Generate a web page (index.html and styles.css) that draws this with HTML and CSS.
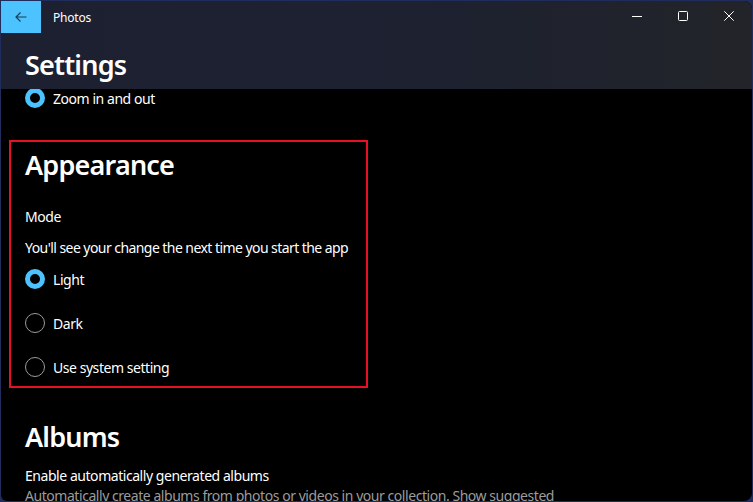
FILE: index.html
```html
<!DOCTYPE html>
<html lang="en">
<head>
<meta charset="utf-8">
<title>Photos</title>
<link rel="stylesheet" href="styles.css">
</head>
<body>
<div class="window">
  <header class="header">
    <div class="titlebar">
      <button class="back" aria-label="Back">
        <svg width="12" height="12" viewBox="0 0 12 12"><path d="M11.5 6H1M5.5 1.5L1 6l4.5 4.5" fill="none" stroke="#173f58" stroke-width="1.2"/></svg>
      </button>
      <span class="app-title">Photos</span>
      <div class="caption">
        <span class="cap-btn"><svg width="10" height="10" viewBox="0 0 10 10"><path d="M0 5.5h10" stroke="#fff" stroke-width="1"/></svg></span>
        <span class="cap-btn"><svg width="10" height="10" viewBox="0 0 10 10"><rect x="0.5" y="0.5" width="9" height="9" rx="1" fill="none" stroke="#fff" stroke-width="1"/></svg></span>
        <span class="cap-btn"><svg width="10" height="10" viewBox="0 0 10 10"><path d="M0.3 0.3l9.4 9.4M9.7 0.3L0.3 9.7" stroke="#fff" stroke-width="1"/></svg></span>
      </div>
    </div>
    <h1 class="page-title">Settings</h1>
  </header>
  <main class="content">
    <div class="list">
      <div class="radio-row first"><span class="radio on"></span><span>Zoom in and out</span></div>
      <section class="section highlight">
        <h2 class="section-title">Appearance</h2>
        <p class="label">Mode</p>
        <p class="desc">You'll see your change the next time you start the app</p>
        <div class="radio-row"><span class="radio on"></span><span>Light</span></div>
        <div class="radio-row"><span class="radio"></span><span>Dark</span></div>
        <div class="radio-row"><span class="radio"></span><span>Use system setting</span></div>
      </section>
      <section class="section">
        <h2 class="section-title albums">Albums</h2>
        <p class="label enable">Enable automatically generated albums</p>
        <p class="sub">Automatically create albums from photos or videos in your collection. Show suggested</p>
      </section>
    </div>
  </main>
</div>
</body>
</html>
```
FILE: styles.css
```css
html, body {
  margin: 0;
  padding: 0;
  height: 100%;
}
body {
  background: #1f2c5c;
  font-family: "Noto Sans", "Open Sans", sans-serif;
  color: #fff;
  overflow: hidden;
}
.window {
  margin: 1px 1px 1px 1px;
  height: 500px;
  background: #000;
  border-radius: 0 8px 8px 6px;
  overflow: hidden;
  display: flex;
  flex-direction: column;
}
.header {
  height: 88px;
  flex: none;
  background: linear-gradient(90deg, #1c2030 0%, #1d2130 55%, #222429 100%);
  display: flex;
  flex-direction: column;
}
.titlebar {
  height: 32px;
  display: flex;
  align-items: center;
}
.back {
  width: 40px;
  height: 32px;
  border: 0;
  padding: 0;
  background: #4cc2ff;
  display: flex;
  align-items: center;
  justify-content: center;
}
.app-title {
  margin-left: 12px;
  font-size: 12px;
  letter-spacing: -0.2px;
  color: #fff;
}
.caption {
  margin-left: auto;
  display: flex;
  height: 32px;
}
.cap-btn {
  width: 46px;
  height: 32px;
  display: flex;
  align-items: center;
  justify-content: center;
  margin-top: -1px;
}
.page-title {
  margin: 14px 0 0 24px;
  font-size: 27px;
  line-height: 36px;
  font-weight: 600;
  letter-spacing: -0.8px;
}
.content {
  flex: 1;
  overflow: hidden;
  padding-left: 24px;
}
.list {
  margin-top: -7px;
  font-size: 14px;
  letter-spacing: -0.45px;
}
.radio-row {
  height: 32px;
  display: flex;
  align-items: center;
  font-size: 14px;
  margin-top: 12px;
}
.radio-row.first {
  margin-top: 0;
}
.radio {
  width: 20px;
  height: 20px;
  box-sizing: border-box;
  border-radius: 50%;
  border: 1px solid #9b9b9b;
  margin-right: 8px;
  flex: none;
}
.radio.on {
  border: 5px solid #4cc2ff;
}
.section {
  margin: 0;
}
.highlight {
  margin: 26px 0 0 -16px;
  width: 359px;
  height: 248px;
  box-sizing: border-box;
  border: 2px solid #e81123;
  padding: 5px 0 0 14px;
}
.section-title {
  margin: 0;
  font-size: 27px;
  line-height: 36px;
  font-weight: 600;
  letter-spacing: -0.8px;
}
.label, .desc, .sub {
  margin: 0;
  font-size: 14px;
  line-height: 20px;
}
.label {
  margin-top: 24px;
}
.desc {
  margin-top: 11px;
  white-space: nowrap;
  letter-spacing: -0.56px;
}
.highlight .radio-row:nth-of-type(1) {
  margin-top: 5px;
}
.albums {
  margin-top: 31px;
}
.enable {
  margin-top: 11px;
}
.sub {
  color: #9c9c9c;
  white-space: nowrap;
}
```
